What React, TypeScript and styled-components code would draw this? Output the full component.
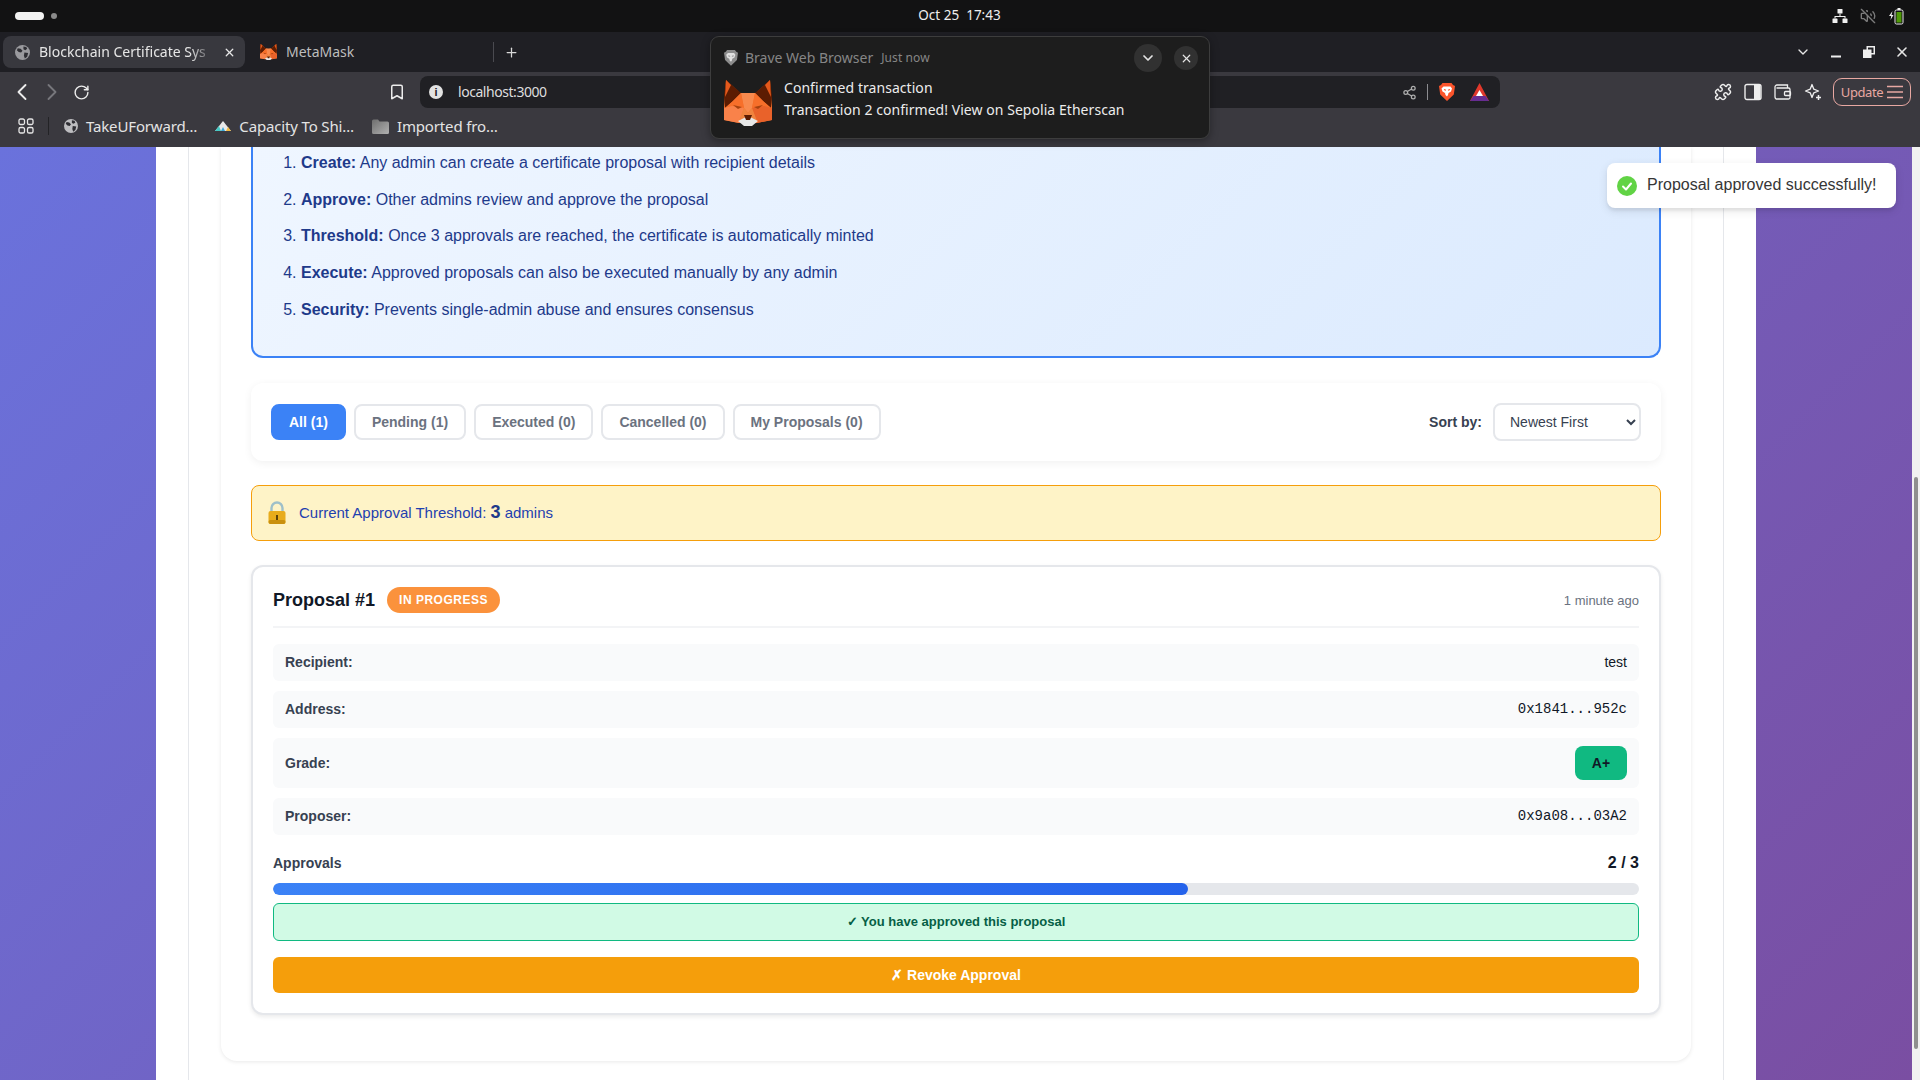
import React from 'react';
import styled, { createGlobalStyle } from 'styled-components';
import { ChevronDown, ChevronLeft, ChevronRight, RotateCw, Bookmark, Share2, Puzzle, X, Plus, VolumeOff } from 'lucide-react';

const Global = createGlobalStyle`
  html, body { margin: 0; padding: 0; width: 1920px; height: 1080px; overflow: hidden; background: #111; }
  * { box-sizing: border-box; }
  svg { flex: none; }
`;

const UI = `"Noto Sans", "Open Sans", sans-serif`;
const WEB = `"Liberation Sans", Arial, sans-serif`;

const Root = styled.div`
  position: relative;
  width: 1920px;
  height: 1080px;
  display: flex;
  flex-direction: column;
  overflow: hidden;
  font-family: ${WEB};
`;

/* ---------- desktop bar ---------- */
const TopBar = styled.div`
  height: 32px;
  flex: none;
  background: #121213;
  display: grid;
  grid-template-columns: 1fr auto 1fr;
  align-items: center;
  padding: 0 16px 0 15px;
  color: #eee;
  font: 13.5px ${UI};
`;
const Activities = styled.div`
  display: flex;
  align-items: center;
  gap: 7px;
`;
const ActivePill = styled.span`
  width: 29px;
  height: 8px;
  border-radius: 4px;
  background: #f2f2f2;
`;
const ActiveDot = styled.span`
  width: 6px;
  height: 6px;
  border-radius: 50%;
  background: #8a8a8a;
`;
const Clock = styled.div`
  white-space: pre;
  margin-top: -2px;
`;
const Tray = styled.div`
  display: flex;
  align-items: center;
  justify-content: flex-end;
  gap: 12px;
`;

/* ---------- tab strip ---------- */
const TabStrip = styled.div`
  height: 40px;
  flex: none;
  background: #1f1f24;
  display: flex;
  align-items: center;
  padding: 0 10px 0 3px;
  font: 14px ${UI};
`;
const Tab = styled.div<{ $active?: boolean }>`
  width: 242px;
  height: 32px;
  border-radius: 8px;
  display: flex;
  align-items: center;
  padding-left: 12px;
  gap: 9px;
  background: ${p => (p.$active ? '#38383e' : 'transparent')};
  color: ${p => (p.$active ? '#e6e6e6' : '#bdbdbd')};
  margin-right: ${p => (p.$active ? '3px' : '0')};
`;
const TabTitle = styled.span<{ $fade?: boolean }>`
  flex: 1;
  white-space: nowrap;
  margin-top: -2px;
  ${p => (p.$fade ? 'mask-image: linear-gradient(90deg, #000 86%, transparent 100%);' : '')}
`;
const TabClose = styled.span`
  display: flex;
  color: #e8e8e8;
  margin-right: 9px;
`;
const TabDivider = styled.span`
  width: 1px;
  height: 20px;
  background: #4a4a50;
  margin-left: 3px;
`;
const NewTab = styled.span`
  display: flex;
  color: #d8d8d8;
  margin-left: 10px;
`;
const WindowControls = styled.div`
  margin-left: auto;
  display: flex;
  align-items: center;
  gap: 17px;
  color: #e6e6e6;
`;
const WinBtn = styled.span`
  width: 16px;
  height: 16px;
  display: flex;
  align-items: center;
  justify-content: center;
`;

/* ---------- toolbar ---------- */
const Toolbar = styled.div`
  height: 75px;
  flex: none;
  background: #3a393f;
  color: #e6e6e6;
  font: 14px ${UI};
  padding-top: 4px;
`;
const NavRow = styled.div`
  height: 32px;
  display: flex;
  align-items: center;
  padding: 0 9px 0 12px;
`;
const NavGroup = styled.div`
  display: flex;
  align-items: center;
  gap: 9.5px;
  width: 408px;
`;
const NavBtn = styled.span<{ $dim?: boolean }>`
  width: 20px;
  height: 20px;
  display: flex;
  align-items: center;
  justify-content: center;
  color: ${p => (p.$dim ? '#77777c' : '#ececec')};
`;
const BookmarkBtn = styled(NavBtn)`
  margin-left: auto;
  margin-right: 13px;
`;
const ShareBtn = styled(NavBtn)`
  color: #b0b0b0;
`;
const AddressBar = styled.div`
  width: 1080px;
  height: 32px;
  background: #202024;
  border-radius: 8px;
  display: flex;
  align-items: center;
  padding: 0 11px 0 9px;
`;
const InfoDot = styled.span`
  width: 14px;
  height: 14px;
  border-radius: 50%;
  background: #e2e2e2;
  color: #202024;
  font: bold 11px/14px ${WEB};
  text-align: center;
  margin-right: 15px;
`;
const Url = styled.span`
  flex: 1;
  font-size: 14px;
  letter-spacing: -0.45px;
  color: #dedede;
  margin-top: -2px;
`;
const AddrDivider = styled.span`
  width: 1px;
  height: 16px;
  background: #8c8c90;
  margin: 0 11px 0 8px;
`;
const ShieldGap = styled.span`
  width: 15px;
`;
const ToolIcons = styled.div`
  margin-left: auto;
  display: flex;
  align-items: center;
  gap: 10px;
`;
const UpdateBtn = styled.div`
  width: 78px;
  height: 28px;
  border: 1px solid #e8a8a2;
  border-radius: 9px;
  display: flex;
  align-items: center;
  justify-content: center;
  gap: 4px;
  color: #e8a8a2;
  font-size: 13px;
  letter-spacing: -0.4px;
`;
const BookmarkRow = styled.div`
  height: 30px;
  margin-top: 3px;
  display: flex;
  align-items: center;
  padding-left: 18px;
  font-size: 15px;
  color: #e4e4e4;
`;
const BarDivider = styled.span`
  width: 1px;
  height: 18px;
  background: #232326;
  margin: 0 15px 0 14px;
`;
const Mark = styled.div`
  display: flex;
  align-items: center;
  gap: 8px;
  margin-right: 18px;
  letter-spacing: -0.15px;
  white-space: nowrap;
`;

/* ---------- page ---------- */
const Viewport = styled.div`
  flex: 1;
  min-height: 0;
  display: flex;
  overflow: hidden;
`;
const PageBg = styled.div`
  width: 1912px;
  padding: 0 156px;
  background: linear-gradient(135deg, #6a72dc 0%, #7a4ea2 100%);
`;
const Container = styled.div`
  width: 1600px;
  height: 100%;
  background: #fff;
  padding: 0 32px;
`;
const Section = styled.div`
  height: 100%;
  border-left: 1px solid #e5e7eb;
  border-right: 1px solid #e5e7eb;
  padding: 0 32px;
`;
const Panel = styled.div`
  padding: 0 30px 46px;
  border-radius: 0 0 16px 16px;
  background: #fff;
  box-shadow: 0 1px 4px rgba(0, 0, 0, 0.09);
`;
const InfoBox = styled.div`
  background: linear-gradient(135deg, #eff6ff 0%, #dbeafe 100%);
  border: 2px solid #3b82f6;
  border-top: 0;
  border-radius: 0 0 12px 12px;
  padding: 3px 24px 23px;
  color: #1e3a8a;
  font-size: 16px;
  line-height: 25.6px;
`;
const Steps = styled.ol`
  margin: 0;
  padding: 0 0 0 24px;
`;
const Step = styled.li`
  margin-bottom: 11.1px;
`;
const FilterBar = styled.div`
  margin-top: 25px;
  height: 78px;
  padding: 0 20px;
  border-radius: 12px;
  background: #fff;
  box-shadow: 0 2px 8px rgba(0, 0, 0, 0.06);
  display: flex;
  align-items: center;
  gap: 8px;
`;
const FilterBtn = styled.button<{ $active?: boolean }>`
  height: 36px;
  padding: 0 16px;
  border: 2px solid ${p => (p.$active ? '#3b82f6' : '#e5e7eb')};
  border-radius: 8px;
  background: ${p => (p.$active ? '#3b82f6' : '#fff')};
  color: ${p => (p.$active ? '#fff' : '#6b7280')};
  font: bold 14px ${WEB};
`;
const SortGroup = styled.div`
  margin-left: auto;
  display: flex;
  align-items: center;
  gap: 11px;
`;
const SortLabel = styled.label`
  font: bold 14px ${WEB};
  color: #374151;
`;
const SortSelect = styled.select`
  width: 148px;
  height: 38px;
  padding: 0 11px;
  border: 2px solid #e5e7eb;
  border-radius: 8px;
  background: #fff;
  color: #374151;
  font: 14px ${WEB};
`;
const Threshold = styled.div`
  margin-top: 24px;
  height: 56px;
  padding: 0 15px;
  border: 1px solid #f59e0b;
  border-radius: 8px;
  background: #fef3c7;
  display: flex;
  align-items: center;
  gap: 12px;
  color: #1e40af;
  font-size: 15px;
`;
const ThresholdText = styled.span`
  margin-top: -2px;
`;
const ThresholdValue = styled.strong`
  font-size: 18px;
  color: #1e3a8a;
`;
const Card = styled.div`
  margin-top: 24px;
  border: 2px solid #e5e7eb;
  border-radius: 12px;
  background: #fff;
  padding: 20px;
  box-shadow: 0 2px 4px rgba(0, 0, 0, 0.08);
`;
const CardHead = styled.div`
  display: flex;
  align-items: center;
  gap: 12px;
  padding-bottom: 13px;
  border-bottom: 2px solid #f3f4f6;
  margin-bottom: 16px;
`;
const CardTitle = styled.h3`
  margin: 0;
  font: bold 18px ${WEB};
  color: #111827;
`;
const StatusBadge = styled.span`
  height: 26px;
  padding: 0 12px;
  border-radius: 13px;
  background: #fb923c;
  color: #fff;
  font: bold 12px/26px ${WEB};
  letter-spacing: 0.5px;
`;
const TimeAgo = styled.span`
  margin-left: auto;
  font-size: 13px;
  color: #6b7280;
`;
const Rows = styled.div`
  display: flex;
  flex-direction: column;
  gap: 10px;
`;
const Row = styled.div<{ $tall?: boolean }>`
  height: ${p => (p.$tall ? '50px' : '37px')};
  padding: 0 12px ${p => (p.$tall ? '0' : '2px')};
  border-radius: 6px;
  background: #f9fafb;
  display: flex;
  align-items: center;
  justify-content: space-between;
`;
const RowLabel = styled.span`
  font: bold 14px ${WEB};
  color: #374151;
`;
const RowValue = styled.span<{ $mono?: boolean }>`
  font: 14px ${p => (p.$mono ? '"Liberation Mono", monospace' : WEB)};
  color: #111827;
`;
const GradeBadge = styled.span`
  width: 52px;
  height: 34px;
  border-radius: 8px;
  background: #10b981;
  color: #111827;
  font: bold 14px/34px ${WEB};
  text-align: center;
`;
const ApprovalHead = styled.div`
  margin-top: 16px;
  height: 24px;
  display: flex;
  align-items: center;
  justify-content: space-between;
`;
const ApprovalLabel = styled.span`
  font: bold 14px ${WEB};
  color: #374151;
`;
const ApprovalCount = styled.span`
  font: bold 16px ${WEB};
  color: #111827;
`;
const Track = styled.div`
  margin-top: 8px;
  height: 12px;
  border-radius: 6px;
  background: #e5e7eb;
  overflow: hidden;
`;
const Fill = styled.div`
  height: 100%;
  border-radius: 6px;
  background: linear-gradient(90deg, #3b82f6, #2563eb);
`;
const ApprovedNote = styled.div`
  margin-top: 8px;
  height: 38px;
  border: 1px solid #10b981;
  border-radius: 6px;
  background: #d1fae5;
  color: #065f46;
  font: bold 13px/36px ${WEB};
  text-align: center;
`;
const RevokeBtn = styled.button`
  display: block;
  width: 100%;
  height: 36px;
  margin-top: 16px;
  border: 0;
  border-radius: 6px;
  background: #f59e0b;
  color: #fff;
  font: bold 14px ${WEB};
`;
const ScrollTrack = styled.div`
  width: 8px;
  flex: none;
  background: #f1f1f1;
  padding-top: 330px;
`;
const ScrollThumb = styled.div`
  width: 4px;
  height: 572px;
  margin-left: 2px;
  border-radius: 2px;
  background: #8f8f8f;
`;

/* ---------- overlays ---------- */
const Notification = styled.div`
  position: absolute;
  left: 710px;
  top: 36px;
  width: 500px;
  height: 103px;
  background: #1d1d1d;
  border: 1px solid #3d3d3d;
  border-radius: 9px;
  box-shadow: 0 2px 8px rgba(0, 0, 0, 0.35);
  font-family: ${UI};
  padding: 7px 11px 0 13px;
`;
const NoteHead = styled.div`
  height: 28px;
  display: flex;
  align-items: center;
`;
const NoteApp = styled.span`
  margin-left: 7px;
  font-size: 14px;
  color: #868686;
  margin-top: -2px;
`;
const NoteTime = styled.span`
  margin-left: 8px;
  font-size: 12px;
  letter-spacing: 0.1px;
  color: #868686;
  margin-top: -2px;
`;
const NoteBtn = styled.span<{ $large?: boolean }>`
  width: ${p => (p.$large ? '28px' : '24px')};
  height: ${p => (p.$large ? '28px' : '24px')};
  border-radius: 50%;
  background: #313131;
  color: #e4e4e4;
  display: flex;
  align-items: center;
  justify-content: center;
  margin-left: ${p => (p.$large ? 'auto' : '12px')};
`;
const NoteBody = styled.div`
  display: flex;
  gap: 12px;
  margin-top: 8px;
`;
const NoteText = styled.div`
  color: #ececec;
  font-size: 14px;
  line-height: 22px;
  letter-spacing: 0.05px;
  margin-top: -3px;
  white-space: nowrap;
`;
const Toast = styled.div`
  position: absolute;
  left: 1607px;
  top: 163px;
  width: 289px;
  height: 45px;
  background: #fff;
  border-radius: 8px;
  box-shadow: 0 3px 10px rgba(0, 0, 0, 0.1), 0 3px 3px rgba(0, 0, 0, 0.05);
  display: flex;
  align-items: center;
  gap: 10px;
  padding: 0 0 0 10px;
  color: #363636;
  font-size: 16px;
`;
const ToastText = styled.span`
  margin-top: -1px;
`;

/* ---------- drawings ---------- */
const Globe = ({ c = '#9a9a9e', size = 15 }: { c?: string; size?: number }) => (
  <svg width={size} height={size} viewBox="0 0 16 16">
    <circle cx="8" cy="8" r="8" fill={c} />
    <path d="M3 3.500l3 .5 2 2-1.500 2-2.500-.5L2 5.500zM9 1.500l3 .5 1 2-2 1.500-2-1zM10 8l4 .5-1 4-2.500 2-1-3z" fill="#2e2e33" />
  </svg>
);
const Fox = ({ size = 48 }: { size?: number }) => (
  <svg width={size} height={(size * 46) / 48} viewBox="0 0 48 46">
    <polygon points="2,0 16,13 24,14 32,13 46,0 48,26 48,40 33,43 15,43 0,40 0,26" fill="#f4702b" />
    <polygon points="2,0 17,13 9,21 1,28 0,16" fill="#5c1c02" />
    <polygon points="46,0 31,13 39,21 47,28 48,16" fill="#5c1c02" />
    <polygon points="2,0 7,5 1,17" fill="#e4591c" />
    <polygon points="46,0 41,5 47,17" fill="#e4591c" />
    <polygon points="17,13 31,13 28,28 24,33 20,28" fill="#f88a4e" />
    <polygon points="17,13 9,21 1,28 8,26 20,28" fill="#f76f2a" />
    <polygon points="31,13 39,21 47,28 40,26 28,28" fill="#f76f2a" />
    <polygon points="0,28 8,26 20,28 15,43 0,40" fill="#f9824a" />
    <polygon points="48,28 40,26 28,28 33,43 48,40" fill="#e9622a" />
    <polygon points="9,25 18,27 14,29" fill="#a8420f" />
    <polygon points="39,25 30,27 34,29" fill="#a8420f" />
    <polygon points="15,41 20,28 24,33 28,28 33,41 24,36" fill="#f0843f" />
    <polygon points="14,41 24,36 34,41 28,46 20,46" fill="#e7e7e7" />
    <polygon points="20,35 28,35 26,40 22,40" fill="#5c1c02" />
  </svg>
);
const Lion = ({ c = '#fb542b', face = '#fff', size = 16 }: { c?: string; face?: string; size?: number }) => (
  <svg width={size} height={(size * 18) / 16} viewBox="0 0 16 18">
    <path d="M3.500 0h9l1.500 2 2 1-1.200 8.500L8 18 1.200 11.500 0 3l2-1z" fill={c} />
    <path d="M4.500 3.500h7l1.500 2-1 3-2.500 1.500-.5 2L8 13.500 6.500 12 6 10 3.500 8.500l-1-3z" fill={face} />
    <path d="M5 6.500l2 .8M11 6.500l-2 .8" stroke={c} strokeWidth="1.200" />
  </svg>
);
const Bat = () => (
  <svg width="19" height="18" viewBox="0 0 19 18">
    <polygon points="9.500,0 19,18 0,18" fill="#e1382b" />
    <polygon points="0,18 19,18 15.500,13 3.500,13" fill="#662d91" />
    <polygon points="9.500,7 13,13 6,13" fill="#fff" />
  </svg>
);
const GridIcon = () => (
  <svg width="16" height="16" viewBox="0 0 16 16" fill="none" stroke="#e6e6e6" strokeWidth="1.300">
    <rect x="1" y="1" width="5.500" height="5.500" rx="1.600" />
    <rect x="9.500" y="1" width="5.500" height="5.500" rx="1.600" />
    <rect x="1" y="9.500" width="5.500" height="5.500" rx="1.600" />
    <rect x="9.500" y="9.500" width="5.500" height="5.500" rx="1.600" />
  </svg>
);
const Peak = () => (
  <svg width="16" height="11" viewBox="0 0 16 11">
    <polygon points="8,0 16,10 0,10" fill="#e8e8e8" />
    <polygon points="0,10 4,5 6,10" fill="#45c9c4" />
    <polygon points="6,10 10,10 8,6" fill="#3aa7d8" />
    <polygon points="11,10 16,10 13,6" fill="#f0b840" />
  </svg>
);
const Folder = () => (
  <svg width="17" height="15" viewBox="0 0 17 15">
    <defs>
      <linearGradient id="fld" x1="0" y1="0" x2="1" y2="1">
        <stop offset="0" stopColor="#6e6e6e" />
        <stop offset="1" stopColor="#b0b0b0" />
      </linearGradient>
    </defs>
    <path d="M0 2a1.500 1.500 0 0 1 1.500-1.500H6l1.500 2h8A1.500 1.500 0 0 1 17 4v9.500a1.500 1.500 0 0 1-1.500 1.500h-14A1.500 1.500 0 0 1 0 13.500z" fill="url(#fld)" />
  </svg>
);
const SidePanel = () => (
  <svg width="18" height="18" viewBox="0 0 18 18">
    <rect x="1" y="1.500" width="16" height="15" rx="2" fill="none" stroke="#eee" strokeWidth="1.400" />
    <rect x="10" y="2" width="6.500" height="14" fill="#eee" />
  </svg>
);
const WalletIcon = () => (
  <svg width="18" height="18" viewBox="0 0 18 18" fill="none" stroke="#eee" strokeWidth="1.300">
    <path d="M2.500 5h12a1.500 1.500 0 0 1 1.500 1.500v8a1.500 1.500 0 0 1-1.500 1.500h-11A2 2 0 0 1 1 14V4a2 2 0 0 1 2-2h10.500v3" />
    <rect x="10.500" y="8.500" width="6" height="4" rx="1" />
  </svg>
);
const Spark = () => (
  <svg width="18" height="18" viewBox="0 0 18 18" fill="none" stroke="#eee" strokeWidth="1.300">
    <path d="M8 1.500l1.800 4.700L14.500 8l-4.700 1.800L8 14.500 6.200 9.800 1.500 8l4.700-1.800z" strokeLinejoin="round" />
    <path d="M14.500 12v5M12 14.500h5" strokeWidth="1.500" />
  </svg>
);
const Burger = () => (
  <svg width="16" height="14" viewBox="0 0 16 14">
    <path d="M0 1.500h16M0 7h16M0 12.500h16" stroke="#e8a8a2" strokeWidth="1.500" />
  </svg>
);
const NetworkIcon = () => (
  <svg width="16" height="16" viewBox="0 0 16 16" fill="#f0f0f0">
    <rect x="5.500" y="1" width="5" height="4.500" rx="0.600" />
    <rect x="0.500" y="10.500" width="5" height="4.500" rx="0.600" />
    <rect x="10.500" y="10.500" width="5" height="4.500" rx="0.600" />
    <path d="M7.500 5.500h1V8H13.500v2.500h-1V9h-9v1.500h-1V8h5z" />
  </svg>
);
const Battery = () => (
  <svg width="16" height="18" viewBox="0 0 16 18">
    <path d="M4.500 4L1 9h2.200l-.7 4L5.500 8H3.500z" fill="#eee" />
    <rect x="7" y="3" width="8" height="14" rx="1.500" fill="none" stroke="#eee" />
    <rect x="9.500" y="1" width="3" height="2" fill="#eee" />
    <rect x="8.500" y="5" width="5" height="10.500" fill="#4f9a06" />
  </svg>
);
const RestoreIcon = () => (
  <svg width="12" height="12" viewBox="0 0 12 12">
    <path d="M3.500 0H12v8.500H8.500V12H0V3.500h3.500z M5 1.500v2h3.500V7h2V1.500z" fill="#eee" fillRule="evenodd" />
  </svg>
);
const MinIcon = () => (
  <svg width="12" height="12" viewBox="0 0 12 12">
    <rect x="1" y="9.500" width="10" height="2" fill="#eee" />
  </svg>
);
const LockIcon = () => (
  <svg width="20" height="24" viewBox="0 0 20 24">
    <path d="M4.500 11V7a5.500 5.500 0 0 1 11 0v4" fill="none" stroke="#9fc0c9" strokeWidth="2.400" />
    <rect x="1.500" y="10" width="17" height="13" rx="2" fill="#e8ac1c" />
    <rect x="1.500" y="19" width="17" height="4" rx="2" fill="#c9900f" />
    <rect x="9" y="14" width="2" height="5" fill="#5c4208" />
  </svg>
);
const ToastCheck = () => (
  <svg width="20" height="20" viewBox="0 0 20 20">
    <circle cx="10" cy="10" r="10" fill="#61d345" />
    <path d="M6 10.500l3 3 5-6" fill="none" stroke="#fff" strokeWidth="2" strokeLinecap="round" strokeLinejoin="round" />
  </svg>
);

const steps = [
  ['Create:', 'Any admin can create a certificate proposal with recipient details'],
  ['Approve:', 'Other admins review and approve the proposal'],
  ['Threshold:', 'Once 3 approvals are reached, the certificate is automatically minted'],
  ['Execute:', 'Approved proposals can also be executed manually by any admin'],
  ['Security:', 'Prevents single-admin abuse and ensures consensus'],
];
const filters = ['All (1)', 'Pending (1)', 'Executed (0)', 'Cancelled (0)', 'My Proposals (0)'];

export default function App() {
  return (
    <Root>
      <Global />
      <TopBar>
        <Activities>
          <ActivePill />
          <ActiveDot />
        </Activities>
        <Clock>{'Oct 25  17:43'}</Clock>
        <Tray>
          <NetworkIcon />
          <VolumeOff size={16} color="#7c7c7c" />
          <Battery />
        </Tray>
      </TopBar>

      <TabStrip>
        <Tab $active>
          <Globe />
          <TabTitle $fade>Blockchain Certificate Sys</TabTitle>
          <TabClose><X size={13} strokeWidth={2.4} /></TabClose>
        </Tab>
        <Tab>
          <Fox size={17} />
          <TabTitle>MetaMask</TabTitle>
        </Tab>
        <TabDivider />
        <NewTab><Plus size={15} /></NewTab>
        <WindowControls>
          <WinBtn><ChevronDown size={16} /></WinBtn>
          <WinBtn><MinIcon /></WinBtn>
          <WinBtn><RestoreIcon /></WinBtn>
          <WinBtn><X size={16} strokeWidth={2.4} /></WinBtn>
        </WindowControls>
      </TabStrip>

      <Toolbar>
        <NavRow>
          <NavGroup>
            <NavBtn><ChevronLeft size={28} strokeWidth={1.6} /></NavBtn>
            <NavBtn $dim><ChevronRight size={28} strokeWidth={1.6} /></NavBtn>
            <NavBtn><RotateCw size={17} /></NavBtn>
            <BookmarkBtn><Bookmark size={18} /></BookmarkBtn>
          </NavGroup>
          <AddressBar>
            <InfoDot>i</InfoDot>
            <Url>localhost:3000</Url>
            <ShareBtn><Share2 size={15} /></ShareBtn>
            <AddrDivider />
            <Lion />
            <ShieldGap />
            <Bat />
          </AddressBar>
          <ToolIcons>
            <NavBtn><Puzzle size={18} /></NavBtn>
            <NavBtn><SidePanel /></NavBtn>
            <NavBtn><WalletIcon /></NavBtn>
            <NavBtn><Spark /></NavBtn>
            <UpdateBtn>Update <Burger /></UpdateBtn>
          </ToolIcons>
        </NavRow>
        <BookmarkRow>
          <GridIcon />
          <BarDivider />
          <Mark><Globe c="#bdbdc0" size={14} />TakeUForward…</Mark>
          <Mark><Peak />Capacity To Shi…</Mark>
          <Mark><Folder />Imported fro…</Mark>
        </BookmarkRow>
      </Toolbar>

      <Viewport>
        <PageBg>
          <Container>
            <Section>
              <Panel>
                <InfoBox>
                  <Steps>
                    {steps.map(([head, body]) => (
                      <Step key={head}><strong>{head}</strong> {body}</Step>
                    ))}
                  </Steps>
                </InfoBox>
                <FilterBar>
                  {filters.map((f, i) => (
                    <FilterBtn key={f} $active={i === 0}>{f}</FilterBtn>
                  ))}
                  <SortGroup>
                    <SortLabel>Sort by:</SortLabel>
                    <SortSelect defaultValue="new">
                      <option value="new">Newest First</option>
                      <option value="old">Oldest First</option>
                    </SortSelect>
                  </SortGroup>
                </FilterBar>
                <Threshold>
                  <LockIcon />
                  <ThresholdText>Current Approval Threshold: <ThresholdValue>3</ThresholdValue> admins</ThresholdText>
                </Threshold>
                <Card>
                  <CardHead>
                    <CardTitle>Proposal #1</CardTitle>
                    <StatusBadge>IN PROGRESS</StatusBadge>
                    <TimeAgo>1 minute ago</TimeAgo>
                  </CardHead>
                  <Rows>
                    <Row><RowLabel>Recipient:</RowLabel><RowValue>test</RowValue></Row>
                    <Row><RowLabel>Address:</RowLabel><RowValue $mono>0x1841...952c</RowValue></Row>
                    <Row $tall><RowLabel>Grade:</RowLabel><GradeBadge>A+</GradeBadge></Row>
                    <Row><RowLabel>Proposer:</RowLabel><RowValue $mono>0x9a08...03A2</RowValue></Row>
                  </Rows>
                  <ApprovalHead>
                    <ApprovalLabel>Approvals</ApprovalLabel>
                    <ApprovalCount>2 / 3</ApprovalCount>
                  </ApprovalHead>
                  <Track><Fill style={{ width: '67%' }} /></Track>
                  <ApprovedNote>✓ You have approved this proposal</ApprovedNote>
                  <RevokeBtn>✗ Revoke Approval</RevokeBtn>
                </Card>
              </Panel>
            </Section>
          </Container>
        </PageBg>
        <ScrollTrack><ScrollThumb /></ScrollTrack>
      </Viewport>

      <Notification>
        <NoteHead>
          <Lion c="#8c8c8c" face="#e0e0e0" size={14} />
          <NoteApp>Brave Web Browser</NoteApp>
          <NoteTime>Just now</NoteTime>
          <NoteBtn $large><ChevronDown size={16} strokeWidth={2.6} /></NoteBtn>
          <NoteBtn><X size={13} strokeWidth={2.2} /></NoteBtn>
        </NoteHead>
        <NoteBody>
          <Fox />
          <NoteText>
            Confirmed transaction<br />
            Transaction 2 confirmed! View on Sepolia Etherscan
          </NoteText>
        </NoteBody>
      </Notification>

      <Toast>
        <ToastCheck />
        <ToastText>Proposal approved successfully!</ToastText>
      </Toast>
    </Root>
  );
}
